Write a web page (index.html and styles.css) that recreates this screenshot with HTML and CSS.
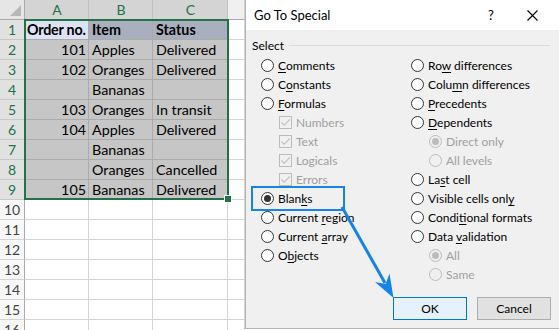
FILE: index.html
```html
<!DOCTYPE html>
<html>
<head>
<meta charset="utf-8">
<link rel="stylesheet" href="styles.css">
</head>
<body>
<div class="page">
  <div class="sheetwrap">
    <div class="sheet">
      <div class="c corner"><span class="tri"></span></div>
      <div class="c ch on">A</div><div class="c ch on">B</div><div class="c ch on">C</div><div class="c ch"></div>

      <div class="c rh on">1</div><div class="c s act b">Order no.</div><div class="c s top b">Item</div><div class="c s top b">Status</div><div class="c"></div>
      <div class="c rh on">2</div><div class="c s r">101</div><div class="c s">Apples</div><div class="c s">Delivered</div><div class="c"></div>
      <div class="c rh on">3</div><div class="c s r">102</div><div class="c s">Oranges</div><div class="c s">Delivered</div><div class="c"></div>
      <div class="c rh on">4</div><div class="c s r"></div><div class="c s">Bananas</div><div class="c s"></div><div class="c"></div>
      <div class="c rh on">5</div><div class="c s r">103</div><div class="c s">Oranges</div><div class="c s">In transit</div><div class="c"></div>
      <div class="c rh on">6</div><div class="c s r">104</div><div class="c s">Apples</div><div class="c s">Delivered</div><div class="c"></div>
      <div class="c rh on">7</div><div class="c s r"></div><div class="c s">Bananas</div><div class="c s"></div><div class="c"></div>
      <div class="c rh on">8</div><div class="c s r"></div><div class="c s">Oranges</div><div class="c s">Cancelled</div><div class="c"></div>
      <div class="c rh on">9</div><div class="c s r">105</div><div class="c s">Bananas</div><div class="c s">Delivered</div><div class="c"></div>
      <div class="c rh">10</div><div class="c"></div><div class="c"></div><div class="c"></div><div class="c"></div>
      <div class="c rh">11</div><div class="c"></div><div class="c"></div><div class="c"></div><div class="c"></div>
      <div class="c rh">12</div><div class="c"></div><div class="c"></div><div class="c"></div><div class="c"></div>
      <div class="c rh">13</div><div class="c"></div><div class="c"></div><div class="c"></div><div class="c"></div>
      <div class="c rh">14</div><div class="c"></div><div class="c"></div><div class="c"></div><div class="c"></div>
      <div class="c rh">15</div><div class="c"></div><div class="c"></div><div class="c"></div><div class="c"></div>
      <div class="c rh">16</div><div class="c"></div><div class="c"></div><div class="c"></div><div class="c"></div>
    </div>
    <div class="selection"><span class="handle"></span></div>
  </div>

  <div class="dialog">
    <div class="titlebar">
      <span class="title">Go To Special</span>
      <span class="help">?</span>
      <span class="close"><svg width="11" height="11" viewBox="0 0 11 11"><path d="M0.5 0.5 L10.5 10.5 M10.5 0.5 L0.5 10.5" stroke="#000" stroke-width="1.1" fill="none"/></svg></span>
    </div>
    <div class="body">
      <div class="legend"><span>Select</span><span class="line"></span></div>
      <div class="cols">
        <div class="col left">
          <div class="item"><span class="radio"></span><span><u>C</u>omments</span></div>
          <div class="item"><span class="radio"></span><span>C<u>o</u>nstants</span></div>
          <div class="item"><span class="radio"></span><span><u>F</u>ormulas</span></div>
          <div class="item sub dis"><span class="check"><svg width="11" height="11" viewBox="0 0 11 11"><path d="M1.5 5.5 L4.3 8.3 L9.8 2.3" stroke="#bcbcbc" stroke-width="1.1" fill="none"/></svg></span><span>Numbers</span></div>
          <div class="item sub dis"><span class="check"><svg width="11" height="11" viewBox="0 0 11 11"><path d="M1.5 5.5 L4.3 8.3 L9.8 2.3" stroke="#bcbcbc" stroke-width="1.1" fill="none"/></svg></span><span>Text</span></div>
          <div class="item sub dis"><span class="check"><svg width="11" height="11" viewBox="0 0 11 11"><path d="M1.5 5.5 L4.3 8.3 L9.8 2.3" stroke="#bcbcbc" stroke-width="1.1" fill="none"/></svg></span><span>Logicals</span></div>
          <div class="item sub dis"><span class="check"><svg width="11" height="11" viewBox="0 0 11 11"><path d="M1.5 5.5 L4.3 8.3 L9.8 2.3" stroke="#bcbcbc" stroke-width="1.1" fill="none"/></svg></span><span>Errors</span></div>
          <div class="item hl"><span class="radio on"></span><span>Blan<u>k</u>s</span></div>
          <div class="item"><span class="radio"></span><span>Current <u>r</u>egion</span></div>
          <div class="item"><span class="radio"></span><span>Current <u>a</u>rray</span></div>
          <div class="item"><span class="radio"></span><span>O<u>b</u>jects</span></div>
        </div>
        <div class="col right">
          <div class="item"><span class="radio"></span><span>Ro<u>w</u> differences</span></div>
          <div class="item"><span class="radio"></span><span>Colu<u>m</u>n differences</span></div>
          <div class="item"><span class="radio"></span><span><u>P</u>recedents</span></div>
          <div class="item"><span class="radio"></span><span><u>D</u>ependents</span></div>
          <div class="item sub dis"><span class="radio on"></span><span>Direct only</span></div>
          <div class="item sub dis"><span class="radio"></span><span>All levels</span></div>
          <div class="item"><span class="radio"></span><span>La<u>s</u>t cell</span></div>
          <div class="item"><span class="radio"></span><span>Visible cells onl<u>y</u></span></div>
          <div class="item"><span class="radio"></span><span>Condi<u>t</u>ional formats</span></div>
          <div class="item"><span class="radio"></span><span>Data <u>v</u>alidation</span></div>
          <div class="item sub dis"><span class="radio on"></span><span>All</span></div>
          <div class="item sub dis"><span class="radio"></span><span>Same</span></div>
        </div>
      </div>
      <div class="buttons">
        <button class="btn ok">OK</button>
        <button class="btn">Cancel</button>
      </div>
    </div>
  </div>

  <svg class="arrow" width="559" height="330" viewBox="0 0 559 330">
    <line x1="342" y1="207" x2="385" y2="283" stroke="#1683ea" stroke-width="3"/>
    <polygon points="393.5,298 375,282 385.6,284 389.5,273.5" fill="#1683ea"/>
  </svg>
</div>
</body>
</html>
```
FILE: styles.css
```css
html, body {
  margin: 0;
  padding: 0;
  background: #fff;
}
.page {
  position: relative;
  width: 559px;
  height: 330px;
  overflow: hidden;
  display: flex;
}
.sheetwrap {
  position: relative;
  width: 245px;
  height: 330px;
  overflow: hidden;
  flex: none;
}
.sheet {
  display: grid;
  grid-template-columns: 25px 64px 64px 75px 17px;
  grid-auto-rows: 20px;
  font-family: Lato, "Liberation Sans", sans-serif;
  font-size: 14.3px;
  color: #000;
}
.c {
  box-sizing: border-box;
  border-right: 1px solid #d4d4d4;
  border-bottom: 1px solid #d4d4d4;
  padding: 0 2px 0 3px;
  line-height: 20px;
  white-space: nowrap;
  overflow: hidden;
}
.corner {
  position: relative;
  background: #e6e6e6;
  border-right-color: #ababab;
  border-bottom-color: #ababab;
}
.tri {
  position: absolute;
  right: 3px;
  bottom: 3px;
  width: 0;
  height: 0;
  border-left: 11px solid transparent;
  border-bottom: 11px solid #b7b7b7;
}
.ch {
  background: #f0f0f0;
  text-align: center;
  color: #444;
  border-bottom-color: #ababab;
  border-right-color: #d0d0d0;
  font-size: 14px;
}
.ch.on {
  background: #d4d4d4;
  color: #217346;
  border-right-color: #c0c0c0;
}
.rh {
  background: #f8f8f8;
  text-align: center;
  padding: 0;
  color: #444;
  border-right-color: #ababab;
  border-bottom-color: #d4d4d4;
  font-size: 14px;
}
.rh.on {
  background: #e1e1e1;
  color: #217346;
  border-bottom-color: #c8c8c8;
}
.s {
  background: #c6c6c6;
  border-right-color: #ababab;
  border-bottom-color: #ababab;
}
.s.act {
  background: #dce3f4;
  padding-left: 2px;
  padding-right: 0;
  letter-spacing: -0.2px;
}
.s.top {
  background: #a9afbe;
}
.b {
  font-weight: bold;
}
.r {
  text-align: right;
}
.selection {
  position: absolute;
  left: 24px;
  top: 19px;
  width: 205px;
  height: 181px;
  box-sizing: border-box;
  border: 2px solid #217346;
}
.handle {
  position: absolute;
  right: -5px;
  bottom: -5px;
  width: 6px;
  height: 6px;
  background: #217346;
  border: 1px solid #fff;
}

/* dialog */
.dialog {
  flex: 1;
  min-width: 0;
  height: 329px;
  box-sizing: border-box;
  border-left: 1px solid #b4b4b4;
  border-bottom: 1px solid #b4b4b4;
  background: #f0f0f0;
  font-family: Lato, "Noto Sans", sans-serif;
  font-size: 12px;
  color: #000;
  display: flex;
  flex-direction: column;
}
.titlebar {
  height: 30px;
  background: #fff;
  display: flex;
  align-items: center;
  padding-left: 8px;
  font-size: 13px;
}
.title {
  flex: 1;
}
.help {
  width: 20px;
  margin-right: 26px;
  text-align: center;
  font-size: 13px;
}
.close {
  width: 11px;
  margin-right: 21px;
  display: flex;
}
.body {
  flex: 1;
  min-width: 0;
  padding: 7px 7px 0 6px;
  display: flex;
  flex-direction: column;
}
.legend {
  height: 16px;
  display: flex;
  align-items: center;
}
.legend .line {
  flex: 1;
  height: 1px;
  background: #dcdcdc;
  margin: 0 2px 0 5px;
}
.cols {
  display: flex;
  margin-top: 3px;
  padding-left: 9px;
}
.col {
  display: flex;
  flex-direction: column;
}
.col.left {
  width: 150px;
  flex: none;
}
.col.right {
  flex: 1;
  min-width: 0;
}
.item {
  height: 19px;
  display: flex;
  align-items: center;
  gap: 4px;
  white-space: nowrap;
}
.item u {
  text-decoration-thickness: 1px;
  text-underline-offset: 2px;
}
.item.sub {
  padding-left: 18px;
}
.item.dis {
  color: #a0a0a0;
}
.radio {
  width: 13px;
  height: 13px;
  box-sizing: border-box;
  border: 1px solid #333;
  border-radius: 50%;
  background: #fff;
  display: flex;
  align-items: center;
  justify-content: center;
  flex: none;
}
.radio.on::after {
  content: "";
  width: 7px;
  height: 7px;
  border-radius: 50%;
  background: #333;
}
.dis .radio {
  border-color: #bcbcbc;
  background: #f0f0f0;
}
.dis .radio.on::after {
  background: #bcbcbc;
}
.check {
  width: 13px;
  height: 13px;
  box-sizing: border-box;
  border: 1px solid #bcbcbc;
  background: #f0f0f0;
  display: flex;
  align-items: center;
  justify-content: center;
  flex: none;
}
.hl {
  position: relative;
}
.hl::after {
  content: "";
  position: absolute;
  left: -10px;
  top: -3px;
  width: 94px;
  height: 25px;
  box-sizing: border-box;
  border: 2px solid #1683ea;
}
.buttons {
  display: flex;
  justify-content: flex-end;
  gap: 10px;
  margin-top: 13px;
  padding-right: 1px;
}
.btn {
  width: 74px;
  height: 23px;
  box-sizing: border-box;
  border: 1px solid #adadad;
  background: #e1e1e1;
  font-family: Lato, "Noto Sans", sans-serif;
  font-size: 12px;
  color: #000;
  padding: 0;
}
.btn.ok {
  border-color: #0078d7;
  background: #e5f1fb;
}
.arrow {
  position: absolute;
  left: 0;
  top: 0;
  pointer-events: none;
}
```
